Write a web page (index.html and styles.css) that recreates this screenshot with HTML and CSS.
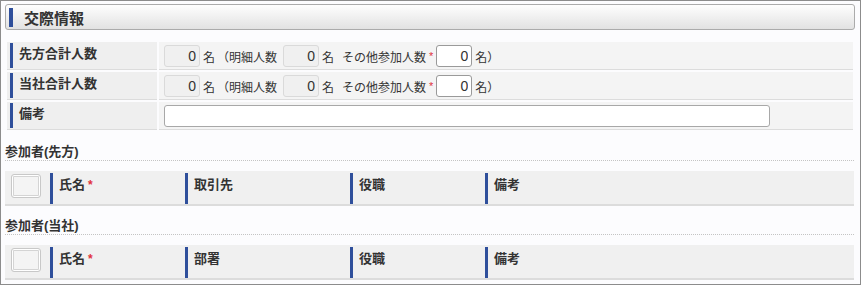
FILE: index.html
```html
<!DOCTYPE html>
<html lang="ja">
<head>
  <meta charset="UTF-8" />
  <title>交際情報</title>
  <link rel="stylesheet" href="styles.css">
</head>
<body>

<div class="frame">
  <div class="panel-title"><span class="bar"></span>交際情報</div>

  <table class="form-table">
    <tr>
      <th><span class="mark"></span>先方合計人数</th>
      <td>
        <div class="count-line">
          <input class="num readonly" type="text" value="0" readonly />
          <span class="unit">名</span>
          <span class="paren">（明細人数</span>
          <input class="num readonly" type="text" value="0" readonly />
          <span class="unit">名</span>
          <span class="other">その他参加人数</span><span class="req">*</span>
          <input class="num" type="text" value="0" />
          <span class="unit">名）</span>
        </div>
      </td>
    </tr>
    <tr>
      <th><span class="mark"></span>当社合計人数</th>
      <td>
        <div class="count-line">
          <input class="num readonly" type="text" value="0" readonly />
          <span class="unit">名</span>
          <span class="paren">（明細人数</span>
          <input class="num readonly" type="text" value="0" readonly />
          <span class="unit">名</span>
          <span class="other">その他参加人数</span><span class="req">*</span>
          <input class="num" type="text" value="0" />
          <span class="unit">名）</span>
        </div>
      </td>
    </tr>
    <tr>
      <th><span class="mark"></span>備考</th>
      <td><input class="memo" type="text" value="" /></td>
    </tr>
  </table>

  <div class="section-title">参加者(先方)</div>
  <div class="grid-head">
    <div class="col col-check"><span class="check-btn"></span></div>
    <div class="col col-name">氏名<span class="req">*</span></div>
    <div class="col col-company">取引先</div>
    <div class="col col-post">役職</div>
    <div class="col col-memo">備考</div>
  </div>

  <div class="section-title">参加者(当社)</div>
  <div class="grid-head">
    <div class="col col-check"><span class="check-btn"></span></div>
    <div class="col col-name">氏名<span class="req">*</span></div>
    <div class="col col-company">部署</div>
    <div class="col col-post">役職</div>
    <div class="col col-memo">備考</div>
  </div>
</div>

</body>
</html>
```

FILE: styles.css
```css
body {
  margin: 0;
  font-family: "Liberation Sans", "Noto Sans CJK JP", sans-serif;
  font-size: 12px;
  color: #333;
  background: #fff;
}
.frame {
  width: 861px;
  height: 285px;
  box-sizing: border-box;
  border: 1px solid #8c8c8c;
  background: #fcfcfe;
  padding: 3px 5px 0 4px;
}
.panel-title {
  height: 26px;
  box-sizing: border-box;
  border: 1px solid #ababab;
  border-radius: 3px;
  background: linear-gradient(#fefefe, #e2e2e2);
  display: flex;
  align-items: center;
  font-size: 15px;
  font-weight: 700;
  color: #333;
}
.panel-title .bar {
  width: 4px;
  height: 19px;
  margin: 0 11px 0 3px;
  background: #2f4f9b;
}
.form-table {
  margin-top: 10px;
  width: 850px;
  border-collapse: separate;
  border-spacing: 2px;
}
.form-table th,
.form-table td {
  height: 27px;
  padding: 0;
  border-bottom: 1px solid #dcdcdc;
  vertical-align: top;
}
.form-table th {
  width: 150px;
  background: #efefef;
  text-align: left;
  font-size: 13px;
  font-weight: 700;
  line-height: 24px;
}
.form-table th .mark {
  display: inline-block;
  width: 3px;
  height: 25px;
  margin: 1px 6px 0 3px;
  background: #2f4f9b;
  vertical-align: top;
}
.form-table td {
  background: #f4f4f4;
  padding: 3px 0 0 5px;
  box-sizing: border-box;
}
.count-line {
  display: flex;
  align-items: center;
  height: 22px;
}
input.num {
  width: 36px;
  height: 22px;
  box-sizing: border-box;
  border: 1px solid #9a9a9a;
  border-radius: 3px;
  background: #fff;
  text-align: right;
  padding: 0 3px;
  font-family: inherit;
  font-size: 14px;
  color: #333;
}
input.num.readonly {
  background: #f0f0f0;
  border-color: #dadada;
}
.unit {
  margin-left: 3px;
}
.paren {
  margin-left: 2px;
  margin-right: 6px;
}
.other {
  margin-left: 8px;
}
.req {
  color: #e0313c;
  font-size: 11px;
  margin-left: 3px;
  margin-right: 3px;
}
input.memo {
  width: 606px;
  height: 22px;
  box-sizing: border-box;
  border: 1px solid #a8a8a8;
  border-radius: 3px;
  background: #fff;
}
.section-title {
  margin-top: 12px;
  height: 16px;
  line-height: 16px;
  font-size: 13px;
  font-weight: 700;
  width: 849px;
  border-bottom: 1px dotted #c4c4c4;
}
.grid-head {
  margin-top: 10px;
  width: 849px;
  height: 33px;
  background: #f0f0f0;
  border-bottom: 2px solid #dcdcdc;
  display: grid;
  grid-template-columns: 45px 135px 165px 135px 1fr;
  font-size: 13px;
  font-weight: 700;
}
.col {
  padding: 4px 0 0 6px;
  line-height: 16px;
}
.col + .col {
  border-left: 3px solid #2f4f9b;
  margin: 2px 0 0;
}
.col-check {
  padding: 3px 0 0 6px;
}
.check-btn {
  display: block;
  width: 30px;
  height: 24px;
  box-sizing: border-box;
  border: 1px solid #c8c8c8;
  border-radius: 3px;
  background: #f4f4f4;
  box-shadow: inset 0 0 0 1px #fff, inset 0 0 0 2px #d4d4d4;
}
.col-name .req {
  font-size: 12px;
}
```
